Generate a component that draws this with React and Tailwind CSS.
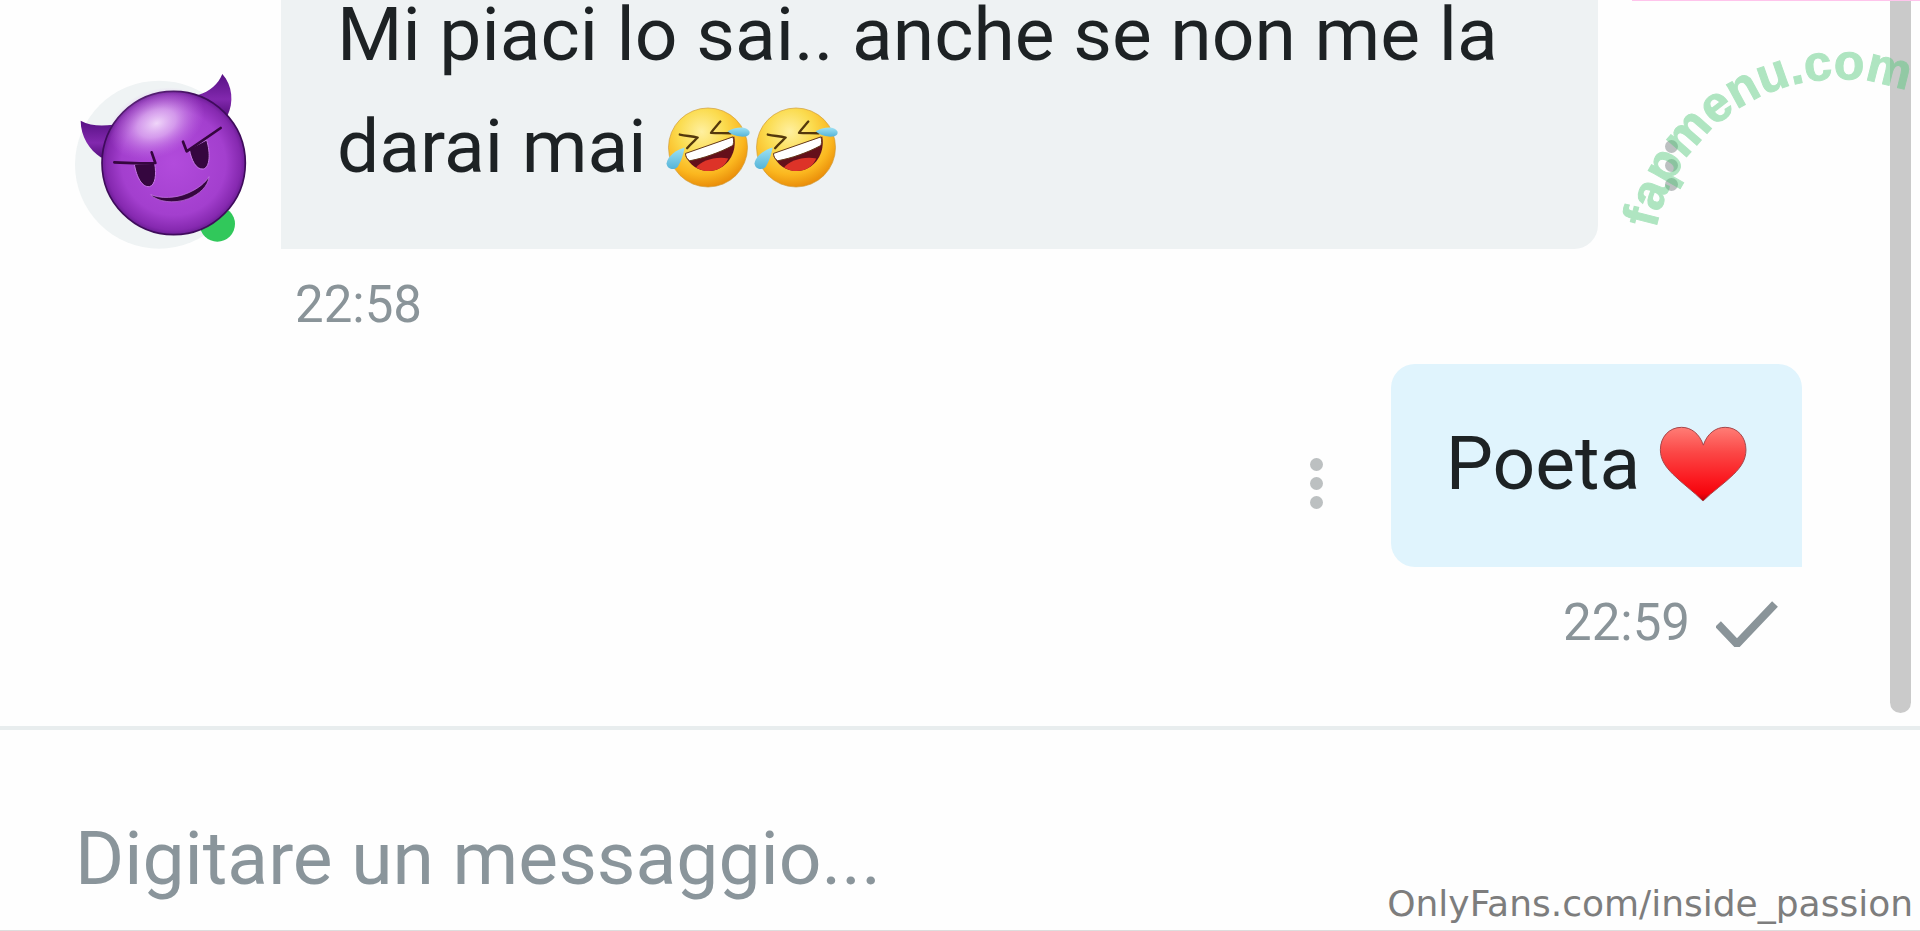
import React, { useState } from "react";

const DevilAvatar = () => (
  <svg viewBox="45 27 540 540" className="h-[180px] w-[180px] shrink-0" role="img" aria-label="smiling face with horns">
    <defs>
      <radialGradient id="devil-skin" cx="0.5" cy="0.5" r="0.52">
        <stop offset="0" stopColor="#b24bdc" />
        <stop offset="0.7" stopColor="#a33fce" />
        <stop offset="0.9" stopColor="#8629b0" />
        <stop offset="1" stopColor="#5e1787" />
      </radialGradient>
      <radialGradient id="devil-shine" cx="0.5" cy="0.5" r="0.5">
        <stop offset="0" stopColor="#f8e6fe" stopOpacity="0.9" />
        <stop offset="0.4" stopColor="#ecc8fa" stopOpacity="0.65" />
        <stop offset="1" stopColor="#c878ea" stopOpacity="0" />
      </radialGradient>
      <linearGradient id="devil-horn" x1="0" y1="0" x2="0" y2="1">
        <stop offset="0" stopColor="#571184" />
        <stop offset="0.6" stopColor="#8228ae" />
        <stop offset="1" stopColor="#57107f" />
      </linearGradient>
    </defs>
    <circle cx="297" cy="314" r="252" fill="#eff3f4" />
    <circle cx="472" cy="492" r="53" fill="#31c85b" />
    <path d="M62 182C90 198 125 198 160 194L176 240L124 293C88 270 62 228 62 182Z" fill="url(#devil-horn)" />
    <path d="M487 42C474 74 450 94 414 105L440 150L502 168C522 128 518 76 487 42Z" fill="url(#devil-horn)" />
    <circle cx="341" cy="309" r="215" fill="url(#devil-skin)" stroke="#3f0b5c" strokeWidth="5" />
    <ellipse cx="290" cy="190" rx="150" ry="100" fill="url(#devil-shine)" transform="rotate(-22 290 190)" />
    <g fill="#35063f" stroke="#c77be6" strokeWidth="3">
      <path d="M223 313L284 310C290 344 286 376 268 380C246 382 230 352 223 313Z" />
      <path d="M388 268L440 240C452 280 450 322 430 327C408 330 394 300 388 268Z" />
    </g>
    <g fill="none" stroke="#35063f" strokeLinecap="round" strokeLinejoin="round">
      <path d="M163 307C205 309 250 312 286 309L275 277" strokeWidth="8" />
      <path d="M482 204L380 274L369 245" strokeWidth="8" />
    </g>
    <path
      d="M272 404C302 416 346 416 384 399C416 385 436 368 447 350C444 380 418 402 386 416C340 434 290 424 272 404Z"
      fill="#35063f"
      stroke="#c77be6"
      strokeWidth="2"
    />
  </svg>
);

const LaughEmoji = () => (
  <svg viewBox="44 44 264 256" className="inline-block h-[85px] w-[88px] align-[-18px]" role="img" aria-label="rolling on the floor laughing">
    <defs>
      <radialGradient id="laugh-skin" cx="0.42" cy="0.3" r="0.72">
        <stop offset="0" stopColor="#fff0a0" />
        <stop offset="0.4" stopColor="#fbdc50" />
        <stop offset="0.75" stopColor="#fbb71f" />
        <stop offset="1" stopColor="#e88a08" />
      </radialGradient>
      <linearGradient id="laugh-tear" x1="0" y1="0" x2="0" y2="1">
        <stop offset="0" stopColor="#9fe2f4" />
        <stop offset="1" stopColor="#55b4d8" />
      </linearGradient>
    </defs>
    <circle cx="173" cy="172" r="119" fill="url(#laugh-skin)" stroke="#cf9a35" strokeWidth="2" />
    <path d="M105 197L252 139C260 182 238 226 196 240C158 250 120 232 105 197Z" fill="#64101a" />
    <path d="M137 232C152 212 196 197 234 205C226 222 214 234 196 240C176 246 154 243 137 232Z" fill="#dd3328" />
    <path d="M105 190L248 140C252 152 250 164 246 167C206 188 160 204 118 212C110 208 106 200 105 190Z" fill="#fff" stroke="#64381a" strokeWidth="3" />
    <g fill="none" stroke="#54380c" strokeWidth="7" strokeLinecap="round" strokeLinejoin="round">
      <path d="M88 133C108 137 124 138 142 142C132 152 120 162 110 174" />
      <path d="M210 94C200 106 190 116 182 128C204 129 222 128 242 129" />
    </g>
    <path d="M232 123C252 112 288 104 298 124C302 142 274 142 256 136C246 133 238 128 232 123Z" fill="url(#laugh-tear)" />
    <path d="M103 172C80 178 52 196 48 220C50 238 72 242 82 230C92 214 98 194 103 172Z" fill="url(#laugh-tear)" />
  </svg>
);

const HeartEmoji = () => (
  <svg viewBox="56 44 266 230" className="inline-block h-[76px] w-[88px] align-[-13px]" role="img" aria-label="red heart">
    <defs>
      <linearGradient id="heart-fill" x1="0" y1="0" x2="0" y2="1">
        <stop offset="0" stopColor="#ff7d76" />
        <stop offset="0.35" stopColor="#fb4645" />
        <stop offset="0.7" stopColor="#fb1a20" />
        <stop offset="0.9" stopColor="#f5040c" />
        <stop offset="1" stopColor="#b8000a" />
      </linearGradient>
    </defs>
    <path
      d="M190 102C178 66 152 48 124 48C86 48 60 78 60 116C60 146 76 168 98 190C126 218 160 242 189 271C218 242 254 218 282 190C304 168 319 146 319 116C319 78 294 48 256 48C228 48 202 66 190 102Z"
      fill="url(#heart-fill)"
      stroke="#a5464a"
      strokeWidth="3"
    />
  </svg>
);

const MoreButton = () => (
  <button type="button" aria-label="More options" className="flex flex-col gap-[6px] pb-[58px] text-[#bcc0c1]">
    <span className="h-[13px] w-[13px] rounded-full bg-current" />
    <span className="h-[13px] w-[13px] rounded-full bg-current" />
    <span className="h-[13px] w-[13px] rounded-full bg-current" />
  </button>
);

const CheckIcon = () => (
  <svg viewBox="0 0 64 48" className="h-[48px] w-[64px]" fill="none" stroke="#8a9499" strokeWidth="8" aria-hidden="true">
    <path d="M2 25L21 45L59 5" />
  </svg>
);

const ArcWatermark = () => (
  <svg viewBox="1600 30 320 220" className="pointer-events-none absolute top-[30px] right-0 h-[220px] w-[320px]">
    <path id="arc-line" d="M1656 229A188 188 0 0 1 1840 79A188 188 0 0 1 2028 267" fill="none" />
    <g opacity="0.45" fill="#50c878" stroke="#50c878" strokeWidth="1">
      <text className="font-['Liberation_Sans'] text-[50px] font-bold">
        <textPath href="#arc-line">fapmenu.com</textPath>
      </text>
    </g>
  </svg>
);

export default function App() {
  const [draft, setDraft] = useState("");

  return (
    <div className="relative flex h-screen flex-col overflow-hidden bg-[#fefefe] font-['Roboto',sans-serif] text-[#1d2224]">
      <main className="flex min-h-0 flex-1">
        <div className="flex min-w-0 flex-1 flex-col justify-end gap-[29px] pr-[88px] pb-[73px] pl-[75px]">
          <article className="shrink-0">
            <div className="flex items-end">
              <DevilAvatar />
              <p className="ml-[26px] max-w-[1317px] rounded-r-3xl bg-[#eef2f3] px-14 pt-[43px] pb-[47px] text-[75px] leading-[112px]">
                Mi piaci lo sai.. anche se non me la darai mai <LaughEmoji />
                <LaughEmoji />
              </p>
              <div className="ml-[67px]">
                <MoreButton />
              </div>
            </div>
            <time className="mt-[26px] block pl-[220px] text-[51px] leading-[60px] text-[#8a9499]">22:58</time>
          </article>

          <article className="shrink-0">
            <div className="flex items-end justify-end">
              <div className="mr-[68px]">
                <MoreButton />
              </div>
              <p className="rounded-3xl rounded-br-none bg-[#e0f4fd] px-[55px] pt-[43px] pb-[48px] text-[75px] leading-[112px]">
                Poeta <HeartEmoji />
              </p>
            </div>
            <div className="mt-[26px] flex h-[60px] items-center justify-end gap-[26px] pr-[22px]">
              <time className="text-[51px] leading-[60px] text-[#8a9499]">22:59</time>
              <CheckIcon />
            </div>
          </article>
        </div>
        <div className="mr-[9px] mb-[13px] w-[21px] shrink-0 rounded-b-full bg-[#cacaca]" />
      </main>

      <footer className="border-t-4 border-b border-t-[#e8edee] border-b-[#dddddd] px-[75px] pt-[72px] pb-4">
        <input
          type="text"
          value={draft}
          onChange={(e) => setDraft(e.target.value)}
          aria-label="Digitare un messaggio"
          placeholder="Digitare un messaggio..."
          className="block h-[112px] w-full bg-transparent text-[75px] leading-[112px] outline-none placeholder:text-[#8a959b]"
        />
      </footer>

      <div className="absolute top-0 right-0 h-px w-[288px] bg-[#ffc4ec]" />
      <ArcWatermark />
      <span className="pointer-events-none absolute right-[7px] bottom-[5px] font-['DejaVu_Sans',sans-serif] text-[36px] leading-[44px] text-[#7d7d7d]">
        OnlyFans.com/inside_passion
      </span>
    </div>
  );
}
